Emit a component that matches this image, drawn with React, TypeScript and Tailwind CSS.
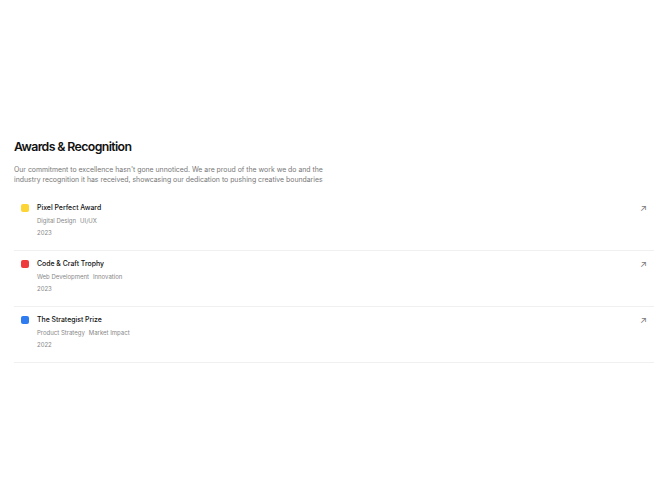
const awards = [
  { title: 'Pixel Perfect Award', tags: ['Digital Design', 'UI/UX'], year: '2023', color: 'bg-[#fcd535]' },
  { title: 'Code & Craft Trophy', tags: ['Web Development', 'Innovation'], year: '2023', color: 'bg-[#ef3b3b]' },
  { title: 'The Strategist Prize', tags: ['Product Strategy', 'Market Impact'], year: '2022', color: 'bg-[#2f7bf0]' },
];

export default function App() {
  return (
    <div className="flex min-h-screen flex-col justify-center bg-white px-[14px] font-['Inter',sans-serif]">
      {/* Heading */}
      <h2 className="text-[12.3px] font-semibold leading-[16px] tracking-[-0.05em] text-[#111]">Awards &amp; Recognition</h2>
      <p className="mt-[10px] max-w-[320px] text-[6.9px] leading-[10px] text-[#777]">
        Our commitment to excellence hasn't gone unnoticed. We are proud of the work we do and the industry recognition it has received, showcasing our dedication to pushing creative boundaries
      </p>

      {/* List */}
      <ul className="mt-[10px] w-[640px]">
        {awards.map((a) => (
          <li key={a.title} className="flex items-start border-b border-[#f0f0f0] px-[7px] pb-[12px] pt-[8px]">
            <span className={`mt-[1px] h-[8px] w-[8px] rounded-[2px] ${a.color}`} />
            <div className="ml-[8px] flex-1">
              <div className="text-[6.9px] font-medium leading-[10px] text-[#111]">{a.title}</div>
              <div className="mt-[3px] flex gap-[4px] text-[6px] leading-[10px] text-[#888]">
                {a.tags.map((t) => (
                  <span key={t}>{t}</span>
                ))}
              </div>
              <div className="mt-[2px] text-[6px] leading-[10px] text-[#888]">{a.year}</div>
            </div>
            <span className="text-[9px] leading-[10px] text-[#777]">↗</span>
          </li>
        ))}
      </ul>
    </div>
  );
}
